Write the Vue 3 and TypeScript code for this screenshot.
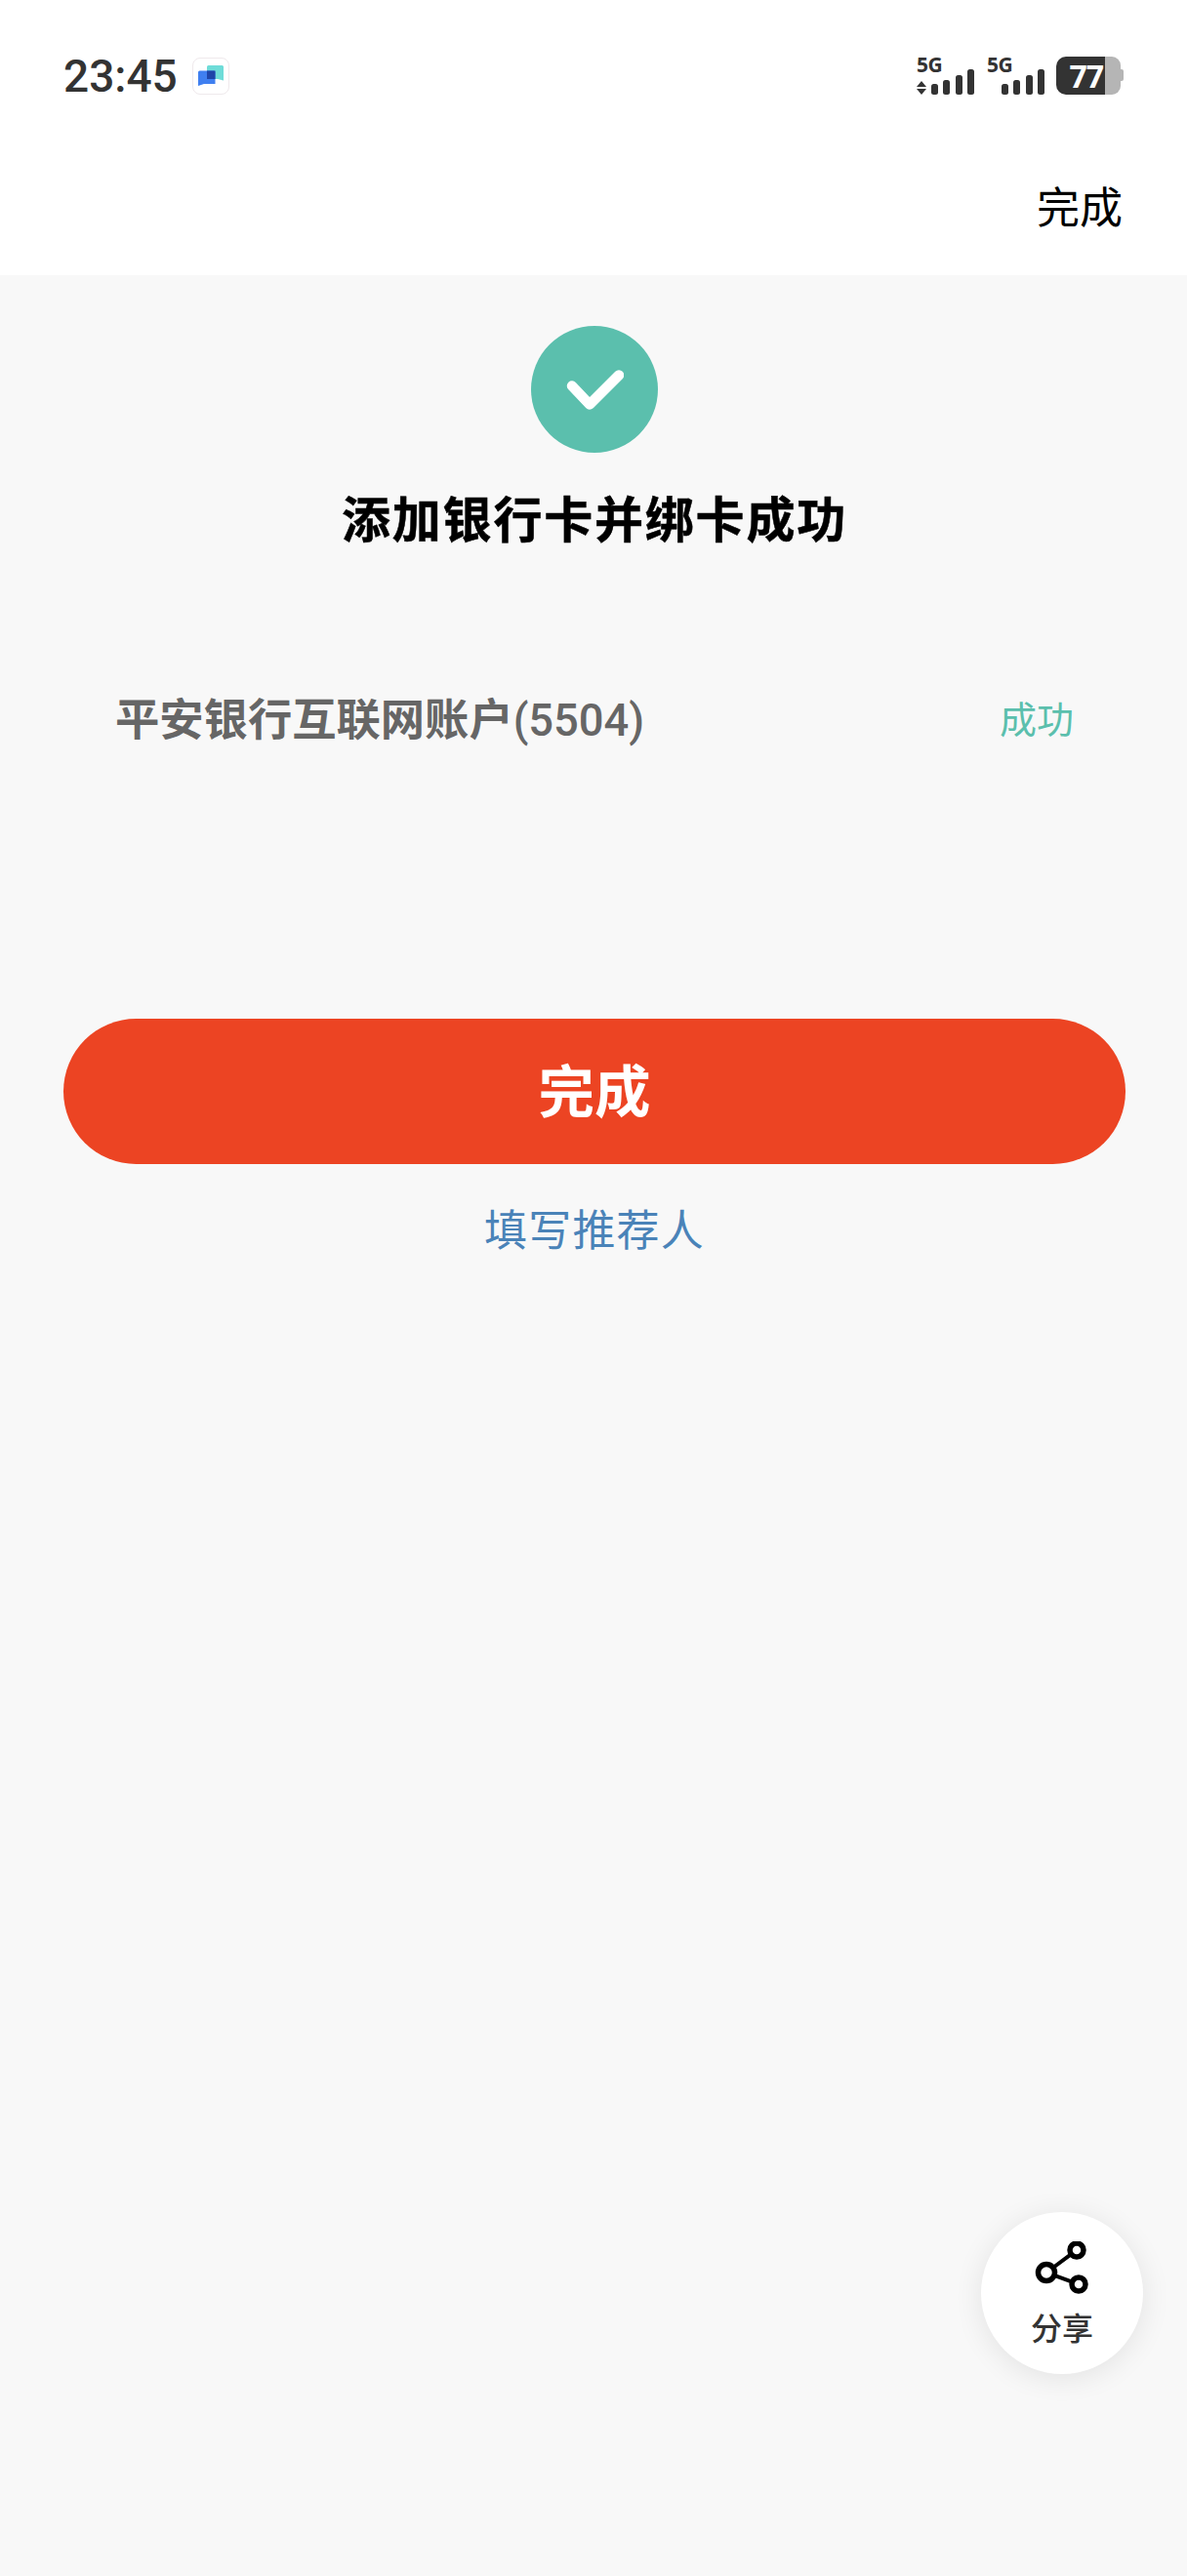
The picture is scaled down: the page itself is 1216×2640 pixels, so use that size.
<script setup lang="ts">
const title = '添加银行卡并绑卡成功'
</script>

<template>
  <div class="page">
    <header class="head">
      <div class="status">
        <div class="left">
          <span class="time">23:45</span>
          <span class="appicon">
            <svg width="26" height="22" viewBox="0 0 26 22">
              <path d="M9 1.500A1.500 1.500 0 0 1 10.500 0H24.500A1.500 1.500 0 0 1 26 1.500V15.500L20 14H9z" fill="#6fdcd8" />
              <path d="M0 7A1.500 1.500 0 0 1 1.500 5.500H16A1.500 1.500 0 0 1 17.500 7V19H6L0 21z" fill="#3f7ff0" />
              <path d="M9 5.500h8.500V14H9z" fill="#1f45a8" />
            </svg>
          </span>
        </div>
        <div class="right">
          <div class="sig">
            <span class="g">5G</span>
            <span class="arrows"><i class="up"></i><i class="down"></i></span>
            <span class="bars"><i class="b1"></i><i class="b2"></i><i class="b3"></i><i class="b4"></i></span>
          </div>
          <div class="sig two">
            <span class="g">5G</span>
            <span class="bars"><i class="b1"></i><i class="b2"></i><i class="b3"></i><i class="b4"></i></span>
          </div>
          <div class="batt"><span class="fill">77</span><span class="rest"></span><span class="nub"></span></div>
        </div>
      </div>
      <div class="nav"><span class="done">完成</span></div>
    </header>

    <main class="main">
      <div class="tick">
        <svg width="60" height="46" viewBox="0 0 60 46">
          <path d="M7 19.500L25 38.500L55 8.500" fill="none" stroke="#fff" stroke-width="10.500" stroke-linecap="round" stroke-linejoin="round" />
        </svg>
      </div>
      <h1 class="title">{{ title }}</h1>
      <div class="row">
        <span class="acct">平安银行互联网账户<span class="num">(5504)</span></span>
        <span class="ok">成功</span>
      </div>
      <button class="cta">完成</button>
      <div class="ref">填写推荐人</div>
    </main>

    <div class="share">
      <svg width="56" height="56" viewBox="0 0 56 56">
        <g fill="none" stroke="#000">
          <circle cx="12" cy="32" r="8.500" stroke-width="5.500" />
          <circle cx="43" cy="9" r="7" stroke-width="5.500" />
          <circle cx="45" cy="44" r="7" stroke-width="5.500" />
          <path d="M18.800 27L37.400 13.200M20 34.900L38.400 41.600" stroke-width="4" />
        </g>
      </svg>
      <span class="label">分享</span>
    </div>
  </div>
</template>

<style>
html, body { margin: 0; background: #f8f8f8; }
</style>

<style scoped>
.page {
  position: relative;
  height: 2640px;
  background: #f8f8f8;
  font-family: "Roboto", "Noto Sans CJK SC", sans-serif;
  overflow: hidden;
}
.head { background: #fff; height: 282px; }
.status {
  height: 160px;
  padding: 0 68px 0 65px;
  display: flex;
  justify-content: space-between;
  align-items: flex-start;
  box-sizing: border-box;
}
.left { display: flex; align-items: center; gap: 15px; margin-top: 55px; }
.time { font-size: 46px; line-height: 46px; font-weight: 500; color: #333; }
.appicon {
  width: 38px; height: 38px; border-radius: 8px; border: 1px solid #efe9ec; background: #fff;
  display: flex; align-items: center; justify-content: center; box-sizing: border-box;
}
.right { display: flex; gap: 12px; margin-top: 58px; align-items: flex-start; }
.sig { position: relative; width: 59px; height: 39px; }
.sig.two { margin-left: 1px; }
.g { position: absolute; left: 0; top: -2px; font-size: 21px; line-height: 20px; font-weight: 700; color: #333; font-family: "Noto Sans", sans-serif; letter-spacing: -0.500px; }
.arrows { position: absolute; left: 0; top: 25px; width: 10px; display: block; }
.arrows i { display: block; width: 0; height: 0; border-left: 5px solid transparent; border-right: 5px solid transparent; }
.up { border-bottom: 6px solid #333; margin-bottom: 2px; }
.down { border-top: 6px solid #333; }
.bars { position: absolute; right: 0; bottom: 0; display: flex; gap: 5.300px; align-items: flex-end; }
.bars i { display: block; width: 7px; background: #333; border-radius: 2.500px; }
.b1 { height: 11px; } .b2 { height: 15px; } .b3 { height: 20px; } .b4 { height: 26px; }
.batt { position: relative; display: flex; width: 66px; height: 39px; }
.fill {
  width: 50px; box-sizing: border-box; padding-right: 2px; background: #333; color: #fff; border-radius: 10px 0 0 10px;
  font-size: 32px; line-height: 39px; font-weight: 700; text-align: right; font-family: "Noto Sans", sans-serif;
  letter-spacing: -1px;
}
.rest { width: 16px; background: #b5b5b5; border-radius: 0 9px 9px 0; }
.nub { position: absolute; right: -3px; top: 13px; width: 3px; height: 12px; background: #b5b5b5; border-radius: 0 2px 2px 0; }
.nav { display: flex; justify-content: flex-end; padding: 27px 66px 0 0; }
.done { font-size: 44px; line-height: 54px; color: #000; }

.main { display: flex; flex-direction: column; align-items: center; padding-left: 2px; }
.tick {
  width: 130px; height: 130px; margin-top: 52px; border-radius: 50%; background: #5bbfad;
  display: flex; align-items: center; justify-content: center;
}
.title {
  margin: 34px 0 0; font-size: 50px; line-height: 72px; font-weight: 700; color: #000; letter-spacing: 1.800px;
  -webkit-text-stroke: 0.500px #000;
}
.row {
  align-self: stretch;
  display: flex; justify-content: space-between; align-items: center;
  margin-top: 134px; padding: 0 116px 0 116px; height: 60px;
}
.acct { font-size: 45.300px; font-weight: 700; color: #666; }
.num { font-weight: 500; }
.ok { font-size: 38px; color: #5bbfad; }
.cta {
  margin-top: 280px; width: 1088px; height: 149px; border: 0; border-radius: 75px; background: #ec4423;
  color: #fff; font: 700 57.500px "Noto Sans CJK SC", sans-serif; padding: 0 0 8px;
}
.ref { margin-top: 39px; font-size: 44px; line-height: 60px; color: #4a83b8; letter-spacing: 1.200px; }
.share {
  position: absolute; left: 1005px; top: 2267px; width: 166px; height: 166px; border-radius: 50%;
  background: #fff; box-shadow: 0 4px 30px rgba(0,0,0,.09);
  display: flex; flex-direction: column; align-items: center; box-sizing: border-box; padding-top: 30px;
}
.label { font-size: 32px; line-height: 40px; font-weight: 500; color: #333; margin-top: 14px; }
</style>
